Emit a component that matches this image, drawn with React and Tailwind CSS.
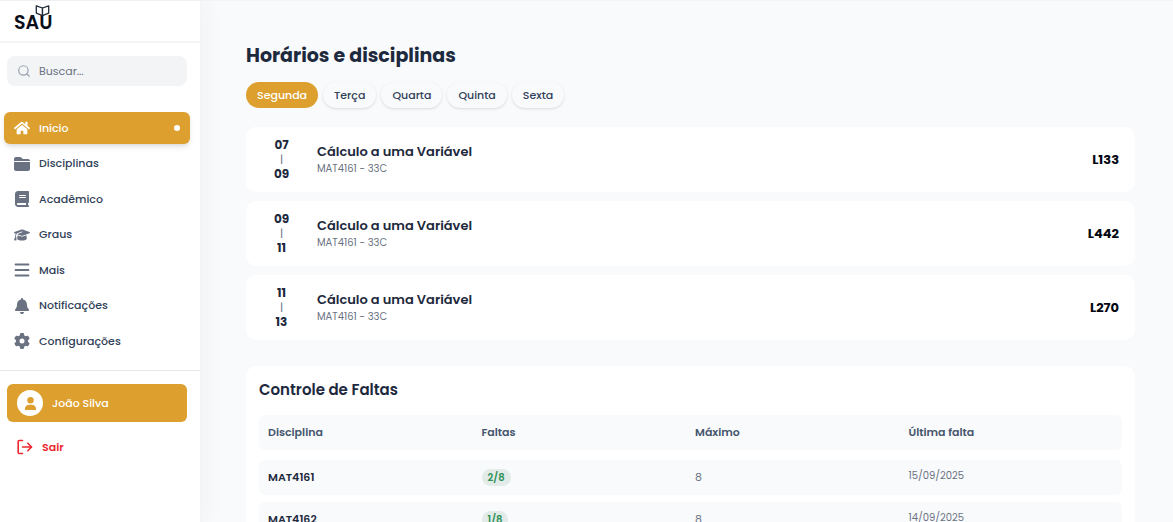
import React, { useState } from "react";
import { Search } from "lucide-react";
import { FaHome } from "react-icons/fa";
import {
  FaFolderClosed,
  FaBook,
  FaGraduationCap,
  FaBell,
  FaGear,
  FaUser,
} from "react-icons/fa6";

const MenuIcon = ({ className }) => (
  <svg
    viewBox="0 0 16 16"
    className={className}
    stroke="currentColor"
    strokeWidth="1.8"
    strokeLinecap="round"
  >
    <path d="M1.5 2.5h13M1.5 8h13M1.5 13.5h13" />
  </svg>
);

const navItems = [
  { id: "inicio", label: "Início", icon: FaHome },
  { id: "disciplinas", label: "Disciplinas", icon: FaFolderClosed },
  { id: "academico", label: "Acadêmico", icon: FaBook },
  { id: "graus", label: "Graus", icon: FaGraduationCap },
  { id: "mais", label: "Mais", icon: MenuIcon },
  { id: "notificacoes", label: "Notificações", icon: FaBell },
  { id: "configuracoes", label: "Configurações", icon: FaGear },
];

const days = ["Segunda", "Terça", "Quarta", "Quinta", "Sexta"];

const classes = [
  { start: "07", end: "09", name: "Cálculo a uma Variável", code: "MAT4161 - 33C", room: "L133" },
  { start: "09", end: "11", name: "Cálculo a uma Variável", code: "MAT4161 - 33C", room: "L442" },
  { start: "11", end: "13", name: "Cálculo a uma Variável", code: "MAT4161 - 33C", room: "L270" },
];

const absences = [
  { code: "MAT4161", count: 2, max: 8, last: "15/09/2025" },
  { code: "MAT4162", count: 1, max: 8, last: "14/09/2025" },
];

const Logo = () => (
  <svg width="48" height="32" viewBox="0 0 48 32" role="img" aria-label="SAU">
    <text x="0" y="27" fontSize="19" fontWeight="600" fill="#0b0f19">
      SAU
    </text>
    <g
      fill="#ffffff"
      stroke="#1f2937"
      strokeWidth="1.3"
      strokeLinejoin="round"
    >
      <path d="M28.5 6 22.3 3.8v7.4l6.2 2.4z" />
      <path d="M28.5 6l6.2-2.2v7.4l-6.2 2.4z" />
    </g>
  </svg>
);

const Sidebar = ({ active, onSelect }) => (
  <aside className="z-10 flex w-[201px] shrink-0 flex-col border-r border-gray-100 bg-white shadow-[4px_0_20px_rgba(31,41,55,0.04)]">
    {/* Logo */}
    <div className="h-[42px] border-b-2 border-gray-100 pl-[14px] pt-px">
      <Logo />
    </div>

    {/* Search */}
    <div className="pl-[7px] pr-[13px] pt-[13px]">
      <label className="flex h-[30px] items-center gap-2 rounded-lg bg-gray-100 pl-[10px]">
        <Search className="size-[14px] shrink-0 text-gray-400" />
        <input
          type="text"
          aria-label="Buscar"
          placeholder="Buscar..."
          className="w-full min-w-0 bg-transparent text-[11px] outline-none placeholder:text-gray-500"
        />
      </label>
    </div>

    {/* Navigation */}
    <nav className="mt-[26px] flex h-[245px] flex-col justify-between pl-1 pr-[10px]">
      {navItems.map(({ id, label, icon: Icon }) => (
        <button
          key={id}
          onClick={() => onSelect(id)}
          className={`flex h-8 items-center gap-[9px] rounded-md px-[10px] text-[11px] font-medium ${
            active === id
              ? "bg-[#dda02e] text-white shadow-md"
              : "text-slate-700 hover:bg-gray-50"
          }`}
        >
          <Icon
            className={`size-4 shrink-0 ${active === id ? "text-white" : "text-gray-500"}`}
          />
          <span>{label}</span>
          {active === id && (
            <span className="ml-auto size-[6px] rounded-full bg-white" />
          )}
        </button>
      ))}
    </nav>

    {/* User */}
    <div className="mt-[13px] border-t border-gray-200 pl-[7px] pr-[13px] pt-[13px]">
      <button className="flex h-[38px] w-full items-center gap-[9px] rounded-md bg-[#dda02e] pl-[10px] text-[11px] font-medium text-white">
        <span className="flex size-[26px] items-center justify-center rounded-full bg-white">
          <FaUser className="size-[13px] text-[#dda02e]" />
        </span>
        João Silva
      </button>
      <button className="mt-[9px] flex h-8 items-center gap-[9px] pl-[10px] text-[11px] font-semibold text-[#ee2730]">
        <svg
          viewBox="0 0 16 16"
          className="size-4"
          fill="none"
          stroke="currentColor"
          strokeWidth="1.6"
          strokeLinecap="round"
          strokeLinejoin="round"
        >
          <path d="M5.5 1.5H2.2a1 1 0 0 0-1 1v11a1 1 0 0 0 1 1h3.3" />
          <path d="M5.5 8h9M10.8 4.2 14.6 8l-3.8 3.8" />
        </svg>
        Sair
      </button>
    </div>
  </aside>
);

const ClassCard = ({ item }) => (
  <article className="flex h-[65px] items-center rounded-[10px] bg-white pl-[10px] pr-4">
    <div className="flex w-[51px] flex-col items-center text-xs font-bold leading-4 text-slate-800">
      <span>{item.start}</span>
      <span className="text-[11px] font-normal leading-[13px] text-gray-500">
        |
      </span>
      <span>{item.end}</span>
    </div>
    <div className="ml-[10px] flex-1">
      <h2 className="text-[13px] font-semibold leading-[18px] text-slate-800">
        {item.name}
      </h2>
      <p className="text-[10px] leading-4 text-gray-500">{item.code}</p>
    </div>
    <span className="text-[13px] font-bold text-gray-950">{item.room}</span>
  </article>
);

const AbsenceTable = () => (
  <section className="mt-[26px] rounded-[10px] bg-white p-[13px]">
    <h2 className="text-[15px] font-semibold leading-[22px] text-slate-800">
      Controle de Faltas
    </h2>
    <table className="mt-[14px] block w-full text-left text-[11px]">
      <thead className="block">
        <tr className="grid grid-cols-4 gap-[9px] rounded-md bg-[#f9fafc] p-[9px] leading-[17px] text-slate-600">
          <th className="font-semibold">Disciplina</th>
          <th className="font-semibold">Faltas</th>
          <th className="font-semibold">Máximo</th>
          <th className="font-semibold">Última falta</th>
        </tr>
      </thead>
      <tbody className="mt-[10px] flex flex-col gap-[7px]">
        {absences.map((row) => (
          <tr
            key={row.code}
            className="grid grid-cols-4 items-start gap-[9px] rounded-md bg-[#f9fafc] p-[9px] leading-[17px]"
          >
            <td className="font-semibold text-slate-800">{row.code}</td>
            <td className="flex">
              <span className="rounded-full bg-[#e2ebe7] px-[6px] text-[10px] font-semibold text-[#2f9158]">
                {row.count}/{row.max}
              </span>
            </td>
            <td className="text-gray-500">{row.max}</td>
            <td className="text-[10px] leading-[13px] text-gray-500">
              {row.last}
            </td>
          </tr>
        ))}
      </tbody>
    </table>
  </section>
);

const App = () => {
  const [activePage, setActivePage] = useState("inicio");
  const [activeDay, setActiveDay] = useState("Segunda");

  return (
    <div className="flex h-screen border-t border-gray-100 bg-[#f9fafc] font-['Poppins','Inter',sans-serif]">
      <Sidebar active={activePage} onSelect={setActivePage} />

      <main className="min-w-0 flex-1 overflow-y-auto pl-[45px] pr-[38px] pt-[41px] [scrollbar-width:none]">
        <h1 className="text-[19px] font-bold leading-7 text-slate-800">
          Horários e disciplinas
        </h1>

        {/* Days */}
        <div className="mt-3 flex gap-[5px]">
          {days.map((day) => (
            <button
              key={day}
              onClick={() => setActiveDay(day)}
              className={`h-[26px] rounded-full px-[11px] text-[11px] font-medium ${
                activeDay === day
                  ? "bg-[#dda02e] text-white"
                  : "bg-[#f9fafc] text-slate-700 shadow-sm"
              }`}
            >
              {day}
            </button>
          ))}
        </div>

        {/* Schedule */}
        <div className="mt-[19px] flex flex-col gap-[9px]">
          {classes.map((item) => (
            <ClassCard key={item.start} item={item} />
          ))}
        </div>

        <AbsenceTable />
      </main>
    </div>
  );
};

export default App;
